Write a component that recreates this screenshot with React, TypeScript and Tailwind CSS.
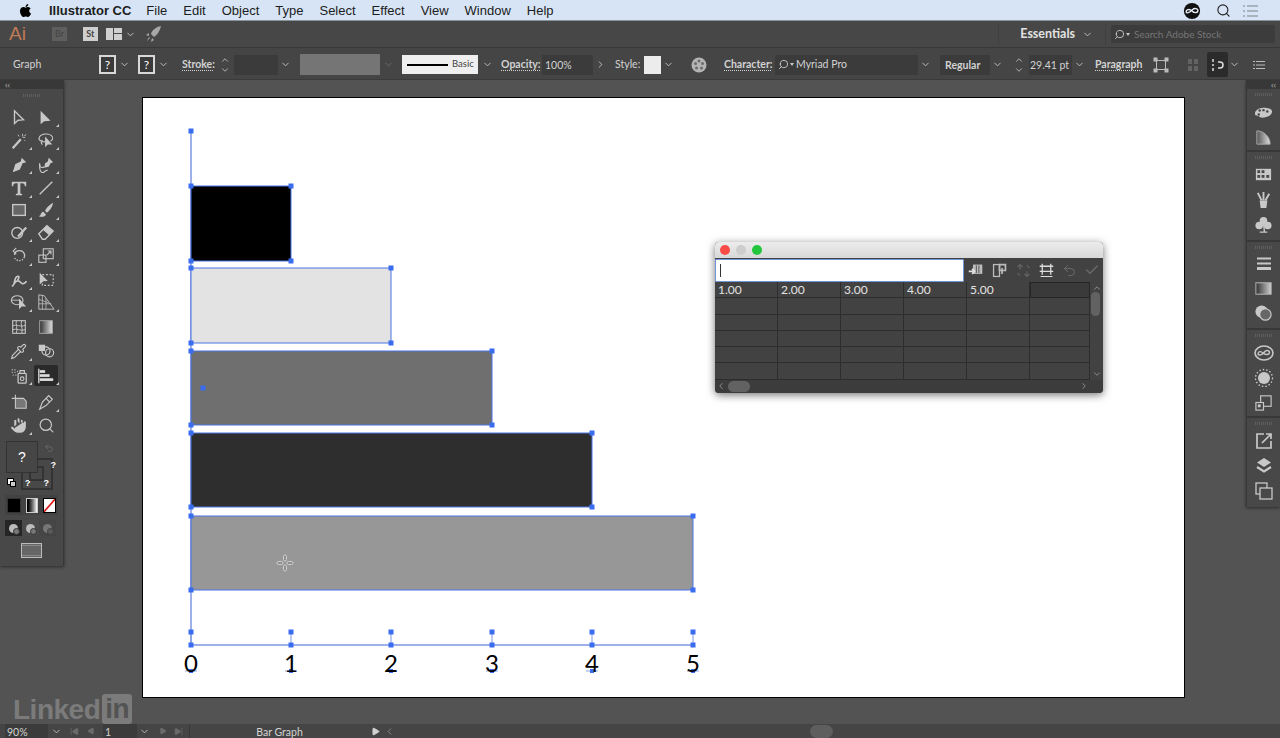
import React from 'react'
import { ChevronDown, ChevronUp, ChevronLeft, ChevronRight, Hand, Search, Pipette, Undo2, Check, Play, SkipBack, SkipForward } from 'lucide-react'
import { FaApple } from 'react-icons/fa'

const Ico = ({ children, size = 18, className = '' }: { children: React.ReactNode; size?: number; className?: string }) => (
  <svg width={size} height={size} viewBox="0 0 20 20" fill="none" stroke="currentColor" strokeWidth={1.5} className={className}>
    {children}
  </svg>
)

const Chev = ({ className = '' }: { className?: string }) => <ChevronDown size={11} strokeWidth={2} className={`shrink-0 text-[#c4c4c4] ${className}`} />

const Stepper = ({ className = '' }: { className?: string }) => (
  <div className={`flex flex-col items-center text-[#c4c4c4] ${className}`}>
    <ChevronUp size={10} strokeWidth={2} />
    <ChevronDown size={10} strokeWidth={2} />
  </div>
)

const Label = ({ children, className = '' }: { children: React.ReactNode; className?: string }) => (
  <span className={`text-[10.5px] font-bold text-[#d2d2d2] underline decoration-dotted underline-offset-2 ${className}`}>{children}</span>
)

const QBox = ({ className = '' }: { className?: string }) => (
  <div className={`flex h-[19px] w-[17px] items-center justify-center border-2 border-[#d8d8d8] bg-[#3a3a3a] text-[12px] text-white ${className}`}>?</div>
)

const SearchDrop = ({ className = '' }: { className?: string }) => (
  <div className={`flex items-center text-[#c8c8c8] ${className}`}>
    <Search size={11} className="-scale-x-100" />
    <span className="ml-[1px] h-0 w-0 border-x-[2.5px] border-t-[3px] border-x-transparent border-t-[#c8c8c8]" />
  </div>
)

const MenuBar = () => (
  <div className="flex h-[21px] items-center border-b border-[#8a929c] bg-[#d7e4f5] pt-[1px] font-['Liberation_Sans',sans-serif] text-[13px] text-[#1c1c1c]">
    <FaApple size={15} className="ml-[18px] text-black" />
    <span className="ml-[16px] font-bold">Illustrator CC</span>
    <span className="ml-[15px]">File</span>
    <span className="ml-[16px]">Edit</span>
    <span className="ml-[16px]">Object</span>
    <span className="ml-[16px]">Type</span>
    <span className="ml-[16px]">Select</span>
    <span className="ml-[16px]">Effect</span>
    <span className="ml-[16px]">View</span>
    <span className="ml-[16px]">Window</span>
    <span className="ml-[16px]">Help</span>
    <div className="ml-auto flex items-center">
      <svg width="18" height="18" viewBox="0 0 20 20">
        <circle cx="10" cy="10" r="9" fill="#111" />
        <path d="M3.5 11c0-3 4-3.500 6.500-1s6 2.500 6.500 0-3.500-4-6-1.500-6 5-7 2.500z" fill="none" stroke="#e8eef8" strokeWidth="1.500" />
      </svg>
      <Search size={15} strokeWidth={1.8} className="ml-[15px] text-[#222]" />
      <svg width="17" height="14" viewBox="0 0 17 14" className="mx-[21px] ml-[11px]" stroke="#9aa3ad" strokeWidth="1.300">
        <path d="M1 2h2M5 2h11M1 7h2M5 7h11M1 12h2M5 12h11" />
      </svg>
    </div>
  </div>
)

const AppBar = () => (
  <div className="flex h-[27px] items-center border-b border-[#383838] bg-[#474747] font-['Lato',sans-serif]">
    <span className="ml-[9px] font-['Liberation_Sans',sans-serif] text-[19px] text-[#c07a55]">Ai</span>
    <div className="ml-[26px] flex h-[14px] w-[15px] items-center justify-center bg-[#5e5e5e] text-[9px] text-[#434343]">Br</div>
    <div className="ml-[16px] flex h-[14px] w-[15px] items-center justify-center bg-[#cfcfcf] text-[9px] font-bold text-[#444]">St</div>
    <svg width="16" height="12" viewBox="0 0 16 12" className="ml-[8px]" fill="#d0d0d0">
      <rect x="0" y="0" width="7" height="12" />
      <rect x="8" y="0" width="8" height="5" />
      <rect x="8" y="6" width="8" height="6" />
    </svg>
    <Chev className="ml-[3px]" />
    <svg width="16" height="18" viewBox="0 0 16 18" className="ml-[10px]" fill="#a8a8a8">
      <path d="M15 1C10 2 6 5 5 9l3 3c3-2 6-6 7-11zM3 8l-3 2 3 1zM6 13l-1 4 3-2zM1 16l3-3-1-1z" />
    </svg>
    <div className="ml-auto flex h-full items-center">
      <span className="mr-[21px] h-[21px] w-px bg-[#404040]" />
      <span className="font-['Lato',sans-serif] text-[12.5px] font-bold text-[#e2e2e2]">Essentials</span>
      <Chev className="ml-[7px]" />
      <span className="ml-[12px] h-[21px] w-px bg-[#404040]" />
      <div className="ml-[5px] mr-[5px] flex h-[18px] w-[164px] items-center rounded-[2px] bg-[#3c3c3c] pl-[3px]">
        <SearchDrop />
        <span className="ml-[4px] text-[10px] text-[#767676]">Search Adobe Stock</span>
      </div>
    </div>
  </div>
)

const ControlBar = () => (
  <div className="flex h-[32px] items-center border-b border-[#3a3a3a] bg-[#454545] pt-[2px] font-['Lato',sans-serif] text-[10.5px] text-[#d2d2d2]">
    <span className="ml-[13px] w-[86px] shrink-0">Graph</span>
    <QBox />
    <Chev className="ml-[3px]" />
    <QBox className="ml-[8px]" />
    <Chev className="ml-[3px]" />
    <Label className="ml-[13px] w-[36px] shrink-0">Stroke:</Label>
    <Stepper className="ml-[2px]" />
    <div className="ml-[4px] h-[20px] w-[44px] bg-[#3b3b3b]" />
    <Chev className="ml-[2px]" />
    <div className="ml-[9px] h-[21px] w-[80px] bg-[#757575]" />
    <Chev className="ml-[3px] opacity-30" />
    <div className="ml-[8px] flex h-[19px] w-[76px] items-center bg-[#efefef] pl-[5px]">
      <span className="h-[2px] w-[41px] bg-black" />
      <span className="ml-[4px] text-[9.5px] text-[#444]">Basic</span>
    </div>
    <Chev className="ml-[4px]" />
    <Label className="ml-[8px] w-[41px] shrink-0">Opacity:</Label>
    <div className="h-[20px] w-[51px] bg-[#3b3b3b] pl-[3px] leading-[20px]">100%</div>
    <ChevronRight size={11} strokeWidth={2} className="ml-[2px] text-[#c4c4c4]" />
    <span className="ml-[9px] w-[29px] shrink-0">Style:</span>
    <div className="h-[18px] w-[17px] bg-[#ececec]" />
    <Chev className="ml-[2px]" />
    <svg width="16" height="16" viewBox="0 0 16 16" className="ml-[17px]">
      <circle cx="8" cy="8" r="7.500" fill="#b4b4b4" />
      <g fill="#6c6c6c">
        <circle cx="8" cy="4" r="1.500" />
        <circle cx="4.500" cy="6.500" r="1.500" />
        <circle cx="11.500" cy="6.500" r="1.500" />
        <circle cx="5.500" cy="11" r="1.500" />
        <circle cx="10.500" cy="11" r="1.500" />
      </g>
    </svg>
    <Label className="ml-[17px] w-[51px] shrink-0">Character:</Label>
    <div className="flex h-[20px] w-[143px] items-center bg-[#3b3b3b] pl-[3px]">
      <SearchDrop />
      <span className="ml-[2px]">Myriad Pro</span>
    </div>
    <Chev className="ml-[2px]" />
    <div className="ml-[9px] h-[20px] w-[50px] bg-[#3b3b3b] pl-[5px] font-bold leading-[20px]">Regular</div>
    <Chev className="ml-[2px]" />
    <Stepper className="ml-[11px]" />
    <div className="ml-[5px] h-[20px] w-[43px] bg-[#3b3b3b] pl-[1px] leading-[20px]">29.41 pt</div>
    <Chev className="ml-[2px]" />
    <Label className="ml-[10px] w-[47px] shrink-0">Paragraph</Label>
    <svg width="16" height="16" viewBox="0 0 16 16" className="ml-[11px]" stroke="#bbb" fill="#bbb">
      <rect x="3.500" y="3.500" width="9" height="9" fill="none" />
      <rect x="1" y="1" width="3" height="3" />
      <rect x="12" y="1" width="3" height="3" />
      <rect x="1" y="12" width="3" height="3" />
      <rect x="12" y="12" width="3" height="3" />
    </svg>
    <div className="ml-[19px] grid h-[12px] w-[10px] grid-cols-2 gap-[2px]">
      <span className="bg-[#636363]" /><span className="bg-[#636363]" /><span className="bg-[#636363]" /><span className="bg-[#636363]" />
    </div>
    <div className="ml-[9px] flex h-[25px] w-[21px] items-center justify-center rounded-[2px] bg-[#2b2b2b]">
      <svg width="14" height="14" viewBox="0 0 14 14" stroke="#ddd" strokeWidth="1.500" fill="none">
        <path d="M2 1v3M2 6v2M2 10v3M7 4h2a3 3 0 0 1 0 6H7" />
      </svg>
    </div>
    <Chev className="ml-[1px]" />
    <svg width="12" height="10" viewBox="0 0 12 10" className="ml-[13px]" stroke="#bbb">
      <path d="M0 1.500h2M3 1.500h9M0 5h2M3 5h9M0 8.500h2M3 8.500h9" />
    </svg>
  </div>
)

const fillIcon = { fill: 'currentColor', stroke: 'none' }

const tools: { key: string; corner?: boolean; active?: boolean; icon: React.ReactNode; h: string }[] = [
  { key: 'select', h: 'h-[23px]', icon: <Ico><path d="M5 2v14l4-3.500 6-.5z" /></Ico> },
  { key: 'direct', h: 'h-[23px]', corner: true, icon: <Ico><path d="M4 2v15l4-3.500 7-.5z" {...fillIcon} /></Ico> },
  { key: 'wand', h: 'h-[23px]', corner: true, icon: <Ico><path d="M3 18l9-10" strokeWidth="2.500" /><path d="M14 2v3M17 6h-3M18 3l-2 1M9 3l1 2M16 9l1 1" strokeWidth="1" /></Ico> },
  { key: 'lasso', h: 'h-[23px]', corner: true, icon: <Ico><path d="M9 11C3 11 1 8 3 5s10-4 13-1 1 5-1 6M6 9c-2 2-1 4 0 5" strokeWidth="1.200" /><path d="M9 5v12l3-3 5 0z" {...fillIcon} /></Ico> },
  { key: 'pen', h: 'h-[25px]', corner: true, icon: <Ico><path d="M13 2l5 5-4 1-3 7-8 3 3-9 6-3z" {...fillIcon} /></Ico> },
  { key: 'curv', h: 'h-[25px]', corner: true, icon: <Ico><path d="M13 2l5 5-3 1-2 4-5 1 1-5 3-2z" {...fillIcon} /><path d="M8 12c-3 2-5 0-5-3s-1 7 2 9 4-3 7-2" strokeWidth="1.200" /></Ico> },
  { key: 'type', h: 'h-[22px]', corner: true, icon: <Ico><path d="M2 3h16v5h-1.500c0-2-1-3.200-3-3.200h-2V16l2 .8V18H6.500v-1.200l2-.8V4.800h-2c-2 0-3 1.200-3 3.200H2z" {...fillIcon} /></Ico> },
  { key: 'line', h: 'h-[22px]', corner: true, icon: <Ico><path d="M3 17L17 3" /></Ico> },
  { key: 'rect', h: 'h-[22px]', corner: true, icon: <Ico><rect x="3" y="4" width="14" height="12" fill="#666" /></Ico> },
  { key: 'brush', h: 'h-[22px]', corner: true, icon: <Ico><path d="M18 2C14 4 10 8 9 11l2 2c3-2 6-6 7-11zM7 12c-3 0-2 4-5 5 3 1 7 1 8-2z" {...fillIcon} /></Ico> },
  { key: 'shaper', h: 'h-[22px]', corner: true, icon: <Ico><circle cx="8" cy="11" r="6" /><path d="M9 15L18 5" strokeWidth="2.500" /></Ico> },
  { key: 'eraser', h: 'h-[22px]', corner: true, icon: <Ico><path d="M2 12l9-9 7 6-9 9H6z" /><path d="M11 3l7 6-4.500 4.500-7-6z" {...fillIcon} /></Ico> },
  { key: 'rotate', h: 'h-[26px]', corner: true, icon: <Ico><path d="M5 9c0-4 3-5 6-5s6 3 5 7" /><path d="M16 11a6 6 0 0 1-11 1" strokeDasharray="1.500 1.500" /><path d="M7 1L3.500 4.500 7 8" strokeWidth="1.200" /></Ico> },
  { key: 'scale', h: 'h-[26px]', corner: true, icon: <Ico><rect x="7" y="2" width="11" height="11" strokeWidth="1.200" /><rect x="2" y="9" width="8" height="8" strokeWidth="1.200" /><path d="M11 9l4-4M12 4.500h3.500V8" strokeWidth="1.200" /></Ico> },
  { key: 'width', h: 'h-[22px]', corner: true, icon: <Ico><path d="M2 17c3-1 3-7 7-6s3 4 6 3 3-3 3-3M4 15c2-4 1-8 4-9s2 3 0 4" strokeWidth="1.800" /></Ico> },
  { key: 'free', h: 'h-[22px]', icon: <Ico><rect x="6" y="4" width="12" height="12" strokeDasharray="2 2" strokeWidth="1.300" /><path d="M3 2v13l4-3.500 5-.5z" {...fillIcon} /></Ico> },
  { key: 'builder', h: 'h-[22px]', corner: true, icon: <Ico><ellipse cx="8" cy="8" rx="6.500" ry="5" strokeWidth="1.200" /><path d="M2 8h10" strokeWidth="1" /><path d="M10 6v12l3-3 5 0z" {...fillIcon} /></Ico> },
  { key: 'persp', h: 'h-[22px]', corner: true, icon: <Ico><path d="M2 2v16h17L8 3z" strokeWidth="1" /><path d="M2 7l11 4M2 12h14M6 3v15M10 6v12" strokeWidth=".8" /></Ico> },
  { key: 'mesh', h: 'h-[27px]', icon: <Ico><rect x="3" y="3" width="14" height="14" strokeWidth="1.200" /><path d="M3 9c4-3 9 2 14-1M3 13c4-2 9 2 14 0M7 3c-1 4 2 9 0 14M13 3c-2 4 2 9 0 14" strokeWidth="1" /></Ico> },
  { key: 'grad', h: 'h-[27px]', icon: <Ico><defs><linearGradient id="tg"><stop offset="0" stopColor="#303030" /><stop offset="1" stopColor="#e0e0e0" /></linearGradient></defs><rect x="3" y="3" width="14" height="14" fill="url(#tg)" stroke="#aaa" strokeWidth="1" /></Ico> },
  { key: 'dropper', h: 'h-[22px]', corner: true, icon: <Pipette size={17} strokeWidth={1.6} /> },
  { key: 'blend', h: 'h-[22px]', icon: <Ico><rect x="2" y="3" width="7" height="7" {...fillIcon} /><circle cx="10" cy="10" r="4.500" strokeWidth="1.300" /><circle cx="14" cy="12" r="4.500" strokeWidth="1.300" /></Ico> },
  { key: 'sprayer', h: 'h-[27px]', corner: true, icon: <Ico><rect x="9" y="7" width="9" height="11" rx="1" strokeWidth="1.400" /><circle cx="13.500" cy="13" r="2" strokeWidth="1.200" /><path d="M11 7V4h5v3" strokeWidth="1.200" /><path d="M2 3h1M5 3h1M2 6h1M5 6h1M8 5h1M3 9h1M6 9h1" strokeWidth="1.500" /></Ico> },
  { key: 'graph', h: 'h-[27px]', corner: true, active: true, icon: <Ico><path d="M2 2v16" strokeWidth="1.400" /><rect x="3" y="3.500" width="6" height="3" {...fillIcon} /><rect x="3" y="8" width="11" height="3" {...fillIcon} /><rect x="3" y="12.500" width="15" height="3" {...fillIcon} /></Ico> },
  { key: 'artboard', h: 'h-[26px]', icon: <Ico><path d="M6 2v4M2 6h4" strokeWidth="1.200" /><path d="M6 6h9l3 3v8H6z" fill="#777" strokeWidth="1.200" /></Ico> },
  { key: 'knife', h: 'h-[26px]', corner: true, icon: <Ico><path d="M3 18l3-8 7-7 4 4-7 7z" strokeWidth="1.300" /><path d="M10 6l4 4" strokeWidth="1.300" /></Ico> },
  { key: 'hand', h: 'h-[20px]', corner: true, icon: <Hand size={19} strokeWidth={1.4} fill="#c8c8c8" stroke="#484848" /> },
  { key: 'zoom', h: 'h-[20px]', icon: <Search size={17} strokeWidth={1.7} /> },
]

const ToolsPanel = () => (
  <div className="relative flex h-[486px] w-[64px] shrink-0 flex-col border-r border-[#383838] bg-[#484848] text-[#c8c8c8] shadow-[0_1px_3px_rgba(0,0,0,0.5)]">
    <div className="h-[9px] bg-[#383838] pl-[5px] text-[8px] leading-[9px] text-[#aaa]">‹‹</div>
    <div className="mx-auto mt-[5px] h-[3px] w-[18px] bg-[repeating-linear-gradient(90deg,#5e5e5e_0_1px,transparent_1px_2px)]" />
    <div className="mt-[9px] grid grid-cols-2 pl-[5px] pr-[3px]">
      {tools.map((t) => (
        <div key={t.key} className={`flex items-center justify-center ${t.h}`}>
          <div className={`relative flex h-[21px] w-[24px] items-center justify-center ${t.active ? 'rounded-[2px] bg-[#2a2a2a] text-[#dcdcdc]' : ''}`}>
            {t.icon}
            {t.corner && <span className="absolute -right-[1px] bottom-[1px] h-0 w-0 border-b-[3px] border-l-[3px] border-b-[#c8c8c8] border-l-transparent" />}
          </div>
        </div>
      ))}
    </div>
    <div className="relative mx-[6px] mt-[6px] h-[54px]">
      <div className="absolute left-[15px] top-[17px] flex h-[32px] w-[32px] items-end justify-between border-[2px] border-[#333] px-[2px] font-['Liberation_Sans',sans-serif] text-[9px] font-bold leading-[10px] text-white">
        <span>?</span><span>?</span>
        <div className="absolute left-[6px] top-[6px] h-[15px] w-[15px] border-[2px] border-[#333]" />
      </div>
      <span className="absolute right-[1px] top-[18px] font-['Liberation_Sans',sans-serif] text-[9px] font-bold text-white">?</span>
      <div className="absolute left-0 top-0 flex h-[32px] w-[32px] items-center justify-center border border-[#333] bg-[#464646] font-['Liberation_Sans',sans-serif] text-[14px] text-white">?</div>
      <Undo2 size={10} className="absolute right-[3px] top-[2px] text-[#6b6b6b]" />
      <div className="absolute left-[1px] top-[37px] h-[7px] w-[7px] border border-black bg-white" />
      <div className="absolute left-[4px] top-[40px] h-[6px] w-[6px] border border-black bg-[#ccc]" />
    </div>
    <div className="mx-[5px] flex h-[20px] items-center justify-between bg-[#424242] px-[2px]">
      <div className="h-[15px] w-[14px] border border-[#333] bg-black" />
      <div className="h-[15px] w-[12px] border border-[#ccc] bg-gradient-to-r from-black to-white" />
      <svg width="13" height="15" viewBox="0 0 13 15" className="border border-black bg-white">
        <path d="M0 15L13 0" stroke="#e01b1b" strokeWidth="2" />
      </svg>
    </div>
    <div className="mx-[5px] mt-[5px] flex h-[16px] items-center">
      {['#252525', '#4a4a4a', '#424242'].map((bg, i) => (
        <div key={bg} className={`flex h-[16px] w-[17px] items-center justify-center ${i === 2 ? 'opacity-40' : ''}`} style={{ backgroundColor: bg }}>
          <span className="relative block h-[9px] w-[9px] rounded-full bg-[#bbb]">
            <span className="absolute left-[4px] top-[4px] block h-[7px] w-[7px] rounded-full border border-[#333] bg-[#777]" />
          </span>
        </div>
      ))}
    </div>
    <div className="mx-auto mt-[7px] flex h-[15px] w-[21px] items-center border border-[#bbb] bg-[#666]">
      <span className="h-[11px] w-full border-y border-[#888]" />
    </div>
  </div>
)

const G = ({ children, h, gap }: { children: React.ReactNode; h: string; gap: string }) => (
  <div className={`flex flex-col items-center border-b-2 border-[#383838] pt-[4px] ${h}`}>
    <div className="h-[3px] w-[18px] bg-[repeating-linear-gradient(90deg,#5e5e5e_0_1px,transparent_1px_2px)]" />
    <div className={gap} />
    {children}
  </div>
)
const Cell = ({ children }: { children: React.ReactNode }) => <div className="flex h-[25px] shrink-0 items-center justify-center text-[#c8c8c8]">{children}</div>

const RightPanel = () => (
  <div className="flex h-[427px] w-[34px] shrink-0 flex-col border-l border-[#383838] bg-[#484848] shadow-[0_1px_3px_rgba(0,0,0,0.5)]">
    <div className="h-[9px] bg-[#383838] pr-[4px] text-right text-[8px] leading-[9px] text-[#aaa]">‹‹</div>
    <G h="h-[63px]" gap="h-[4px]">
      <Cell><Ico size={19}><path d="M10 5C5 5 1 8 1 11s3 2 4 3 3 2 7 1 7-3 7-6-4-4-9-4z" {...fillIcon} /><g fill="#484848" stroke="none"><circle cx="6" cy="8" r="1.300" /><circle cx="10" cy="7.500" r="1.300" /><circle cx="14" cy="9" r="1.300" /><circle cx="5" cy="12" r="1.300" /></g></Ico></Cell>
      <Cell><Ico size={19}><defs><linearGradient id="sw" x1="0" x2="1"><stop offset="0" stopColor="#555" /><stop offset="1" stopColor="#ddd" /></linearGradient></defs><path d="M3 3c7 0 14 6 14 14H3z" fill="url(#sw)" stroke="#aaa" strokeWidth="1" /></Ico></Cell>
    </G>
    <G h="h-[90px]" gap="h-[3px]">
      <Cell><Ico size={19}><rect x="2" y="4" width="16" height="12" {...fillIcon} /><g fill="#484848" stroke="none"><rect x="3.500" y="5.500" width="3" height="3" /><rect x="8" y="5.500" width="3" height="3" /><rect x="3.500" y="10.500" width="3" height="3" /><rect x="8" y="10.500" width="3" height="3" /><rect x="13" y="10.500" width="3" height="3" /></g></Ico></Cell>
      <Cell><Ico size={19}><path d="M6 11h8l-1 8H7z" {...fillIcon} /><path d="M8 11L4 3M10 11V2M12 11l4-7" strokeWidth="2" /></Ico></Cell>
      <Cell><Ico size={19}><circle cx="10" cy="6" r="4" {...fillIcon} /><circle cx="5.500" cy="11" r="4" {...fillIcon} /><circle cx="14.500" cy="11" r="4" {...fillIcon} /><path d="M10 8l1 10H6h8" strokeWidth="1.500" /></Ico></Cell>
    </G>
    <G h="h-[88px]" gap="h-[2px]">
      <Cell><Ico size={20}><path d="M3 4.500h14" strokeWidth="2" /><path d="M3 9.500h14" strokeWidth="2" /><path d="M3 14.500h14" strokeWidth="3" /></Ico></Cell>
      <Cell><Ico size={19}><defs><linearGradient id="gr"><stop offset="0" stopColor="#303030" /><stop offset="1" stopColor="#cfcfcf" /></linearGradient></defs><rect x="2" y="4" width="16" height="12" fill="url(#gr)" stroke="#bbb" strokeWidth="1" /></Ico></Cell>
      <Cell><Ico size={19}><circle cx="8" cy="8" r="6.500" {...fillIcon} /><circle cx="12" cy="11" r="6" fill="#666" stroke="#ccc" strokeWidth="1.200" /></Ico></Cell>
    </G>
    <G h="h-[88px]" gap="h-[3px]">
      <Cell><Ico size={20}><ellipse cx="10" cy="10" rx="9" ry="7" strokeWidth="1.600" /><path d="M4 11c0-3 3-3 5-1s6 2 6.500 0-3-4-5-1-6.500 4-6.500 2z" strokeWidth="1.400" /></Ico></Cell>
      <Cell><Ico size={20}><circle cx="10" cy="10" r="6" {...fillIcon} /><circle cx="10" cy="10" r="8.500" strokeWidth="1.300" strokeDasharray="1.500 2" /></Ico></Cell>
      <Cell><Ico size={19}><rect x="7" y="3" width="11" height="11" strokeWidth="1.200" /><rect x="2" y="10" width="8" height="8" fill="#484848" strokeWidth="1.200" /><rect x="4" y="12" width="3" height="3" fill="currentColor" stroke="none" /></Ico></Cell>
    </G>
    <div className="flex flex-col items-center pt-[4px]">
      <div className="h-[3px] w-[18px] bg-[repeating-linear-gradient(90deg,#5e5e5e_0_1px,transparent_1px_2px)]" />
      <div className="h-[3px]" />
      <Cell><Ico size={20}><path d="M10 3H3v14h14v-7" strokeWidth="1.700" /><path d="M8 12l9-9M12 3h5v5" strokeWidth="1.700" /></Ico></Cell>
      <Cell><Ico size={20}><path d="M10 2l7 4.500-7 4.500-7-4.500z" {...fillIcon} /><path d="M3 11l7 4.500 7-4.500" strokeWidth="2.200" /></Ico></Cell>
      <Cell><Ico size={20}><rect x="2" y="2" width="11" height="11" strokeWidth="1.300" /><rect x="6" y="7" width="12" height="11" fill="#484848" strokeWidth="1.300" /></Ico></Cell>
    </div>
  </div>
)

const GraphWindow = () => {
  const rows = Array.from({ length: 6 })
  const values = ['1.00', '2.00', '3.00', '4.00', '5.00', '']
  return (
    <div className="absolute left-[572px] top-[144px] w-[388px] overflow-hidden rounded-[4px] bg-[#424242] font-['Lato',sans-serif] shadow-[0_2px_8px_rgba(0,0,0,0.55)]">
      <div className="flex h-[16px] items-center gap-[6px] bg-gradient-to-b from-[#ececec] to-[#d8d8d8] pl-[5px]">
        <span className="h-[10px] w-[10px] rounded-full bg-[#fb4b46]" />
        <span className="h-[10px] w-[10px] rounded-full bg-[#cdcdcd]" />
        <span className="h-[10px] w-[10px] rounded-full bg-[#22c63c]" />
      </div>
      <div className="flex h-[24px] items-center bg-[#424242]">
        <div className="flex h-[23px] w-[249px] items-center rounded-[1px] border border-[#6f97d8] bg-white pl-[4px]">
          <span className="h-[13px] w-px bg-[#333]" />
        </div>
        <div className="flex flex-1 items-center justify-around text-[#bcbcbc]">
          <Ico size={17}><path d="M7 3h11v11H7z" {...fillIcon} /><path d="M2 11h7M6 8l3 3-3 3" strokeWidth="2" stroke="#e0e0e0" /><path d="M11 4v9M14 4v9" stroke="#424242" strokeWidth="1" /></Ico>
          <Ico size={17}><rect x="3" y="3" width="7" height="14" strokeWidth="1.500" /><path d="M10 3h7v7h-7zM10 10l6 0M13 7v7" stroke="#bcbcbc" strokeWidth="2" /></Ico>
          <Ico size={17} className="text-[#666]"><path d="M6 3v6M3 6l3-3 3 3M14 17v-6M11 14l3 3 3-3M3 13l3 3M17 7l-3-3" strokeWidth="1.300" /></Ico>
          <Ico size={17} className="text-[#ddd]"><path d="M5 2v13M15 2v13M2 5h16M2 11h16" strokeWidth="1.500" /><path d="M3 17h14" strokeWidth="1.200" /></Ico>
          <Undo2 size={15} strokeWidth={1.6} className="text-[#6b6b6b]" />
          <Check size={16} strokeWidth={2} className="text-[#6b6b6b]" />
        </div>
      </div>
      <div className="flex">
        <div className="grid w-[375px] grid-cols-[63px_63px_63px_63px_63px_60px]">
          {rows.map((_, r) =>
            values.map((v, c) => (
              <div
                key={`${r}-${c}`}
                className={`flex h-[16.3px] items-center border-b border-r border-[#2d2d2d] pl-[3px] text-[12px] leading-none text-[#e2e2e2] ${r === 0 && c === 5 ? 'border-l border-t border-[#262626] bg-[#3a3a3a]' : ''}`}
              >
                {r === 0 ? v : ''}
              </div>
            )),
          )}
        </div>
        <div className="relative flex w-[13px] flex-col items-center justify-between py-[1px] text-[#9a9a9a]">
          <ChevronUp size={10} />
          <div className="absolute left-[1px] top-[10px] h-[24px] w-[9px] rounded-full bg-[#626262]" />
          <ChevronDown size={10} />
        </div>
      </div>
      <div className="flex h-[13px] items-center bg-[#3c3c3c] text-[#9a9a9a]">
        <ChevronLeft size={10} className="ml-[1px]" />
        <div className="ml-[2px] h-[11px] w-[22px] rounded-full bg-[#626262]" />
        <ChevronRight size={10} className="ml-auto mr-[14px]" />
      </div>
    </div>
  )
}

const handles = [
  [191, 131], [191, 186], [291, 186], [191, 261], [291, 261], [191, 268], [391, 268], [191, 343], [391, 343],
  [191, 351], [492, 351], [191, 425], [492, 425], [191, 433], [592, 433], [191, 507], [592, 507], [191, 516],
  [693, 516], [191, 590], [693, 590], [191, 632], [291, 632], [391, 632], [492, 632], [592, 632], [693, 632],
  [191, 645], [291, 645], [391, 645], [492, 645], [592, 645], [693, 645], [203, 388],
]
const bars = [
  { y: 186, w: 100, h: 75, fill: '#000000' },
  { y: 268, w: 200, h: 75, fill: '#e3e3e3' },
  { y: 351, w: 301, h: 74, fill: '#6f6f6f' },
  { y: 433, w: 401, h: 74, fill: '#2e2e2e' },
  { y: 516, w: 502, h: 74, fill: '#979797' },
]
const ticks = [
  { x: 191, t: '0' }, { x: 291, t: '1' }, { x: 391, t: '2' }, { x: 492, t: '3' }, { x: 592, t: '4' }, { x: 693, t: '5' },
]

const Chart = () => (
  <svg width="1041" height="599" viewBox="143 98 1041 599" className="block">
    <path d="M191 131V645H693" fill="none" stroke="#7d97e0" strokeWidth="1.500" />
    {bars.map((b) => (
      <rect key={b.y} x={191} y={b.y} width={b.w} height={b.h} fill={b.fill} stroke="#4a74e4" strokeWidth="1" />
    ))}
    {ticks.map((t) => (
      <g key={t.t}>
        <path d={`M${t.x} 632V645`} stroke="#7d97e0" />
        <path d={`M${t.x - 6} 671H${t.x + 6}`} stroke="#8aa4ea" />
        <rect x={t.x - 2} y={669} width="4" height="4" fill="#3a6cf0" />
        <text x={t.x} y={672} textAnchor="middle" fontFamily="Lato, sans-serif" fontSize="24" fill="#000">{t.t}</text>
      </g>
    ))}
    {handles.map(([x, y]) => (
      <rect key={`${x}-${y}`} x={x - 2.500} y={y - 2.500} width="5" height="5" fill="#3a6cf0" />
    ))}
    <g stroke="#cfcfcf" strokeWidth="1" fill="#8f8f8f">
      <rect x="283.500" y="555" width="3" height="6" rx="1.500" />
      <rect x="283.500" y="565" width="3" height="6" rx="1.500" />
      <rect x="277" y="561.500" width="6" height="3" rx="1.500" />
      <rect x="287" y="561.500" width="6" height="3" rx="1.500" />
    </g>
  </svg>
)

const StatusBar = () => (
  <div className="flex h-[14px] items-center overflow-hidden bg-[#454545] font-['Lato',sans-serif] text-[10.5px] text-[#d2d2d2]">
    <div className="ml-[5px] h-[14px] w-[43px] bg-[#3b3b3b] pl-[2px] leading-[16px]">90%</div>
    <Chev className="ml-[3px]" />
    <SkipBack size={9} className="ml-[8px] text-[#6b6b6b]" fill="#6b6b6b" />
    <Play size={8} className="ml-[8px] -scale-x-100 text-[#6b6b6b]" fill="#6b6b6b" />
    <div className="ml-[8px] h-[14px] w-[34px] bg-[#3b3b3b] pl-[2px] leading-[16px]">1</div>
    <Chev className="ml-[2px]" />
    <Play size={8} className="ml-[9px] text-[#6b6b6b]" fill="#6b6b6b" />
    <SkipForward size={9} className="ml-[7px] text-[#6b6b6b]" fill="#6b6b6b" />
    <div className="ml-[6px] h-[14px] w-[180px] border-l border-[#383838] text-center leading-[16px]">Bar Graph</div>
    <Play size={9} className="ml-[2px] text-[#d2d2d2]" fill="#d2d2d2" />
    <ChevronLeft size={11} className="ml-[4px] text-[#8a8a8a]" />
    <div className="ml-[415px] h-[13px] w-[23px] rounded-full bg-[#5e5e5e]" />
  </div>
)

export default function App() {
  return (
    <div className="flex h-screen w-full flex-col overflow-hidden bg-[#535353]">
      <MenuBar />
      <AppBar />
      <ControlBar />
      <div className="relative flex flex-1 items-start overflow-hidden bg-[#535353]">
        <ToolsPanel />
        <div className="flex-1 pl-[78px] pt-[17px]">
          <div className="relative h-[601px] w-[1043px] border border-black bg-white">
            <Chart />
            <GraphWindow />
          </div>
        </div>
        <RightPanel />
        <div className="absolute bottom-0 left-[13px] flex items-end font-['Liberation_Sans',sans-serif] text-[28px] font-bold leading-[28px] tracking-[-0.5px] text-[#7b7b7b]">
          <span>Linked</span>
          <span className="ml-[2px] flex h-[30px] w-[30px] items-center justify-center rounded-[3px] bg-[#7b7b7b] text-[#535353]">in</span>
        </div>
      </div>
      <StatusBar />
    </div>
  )
}
